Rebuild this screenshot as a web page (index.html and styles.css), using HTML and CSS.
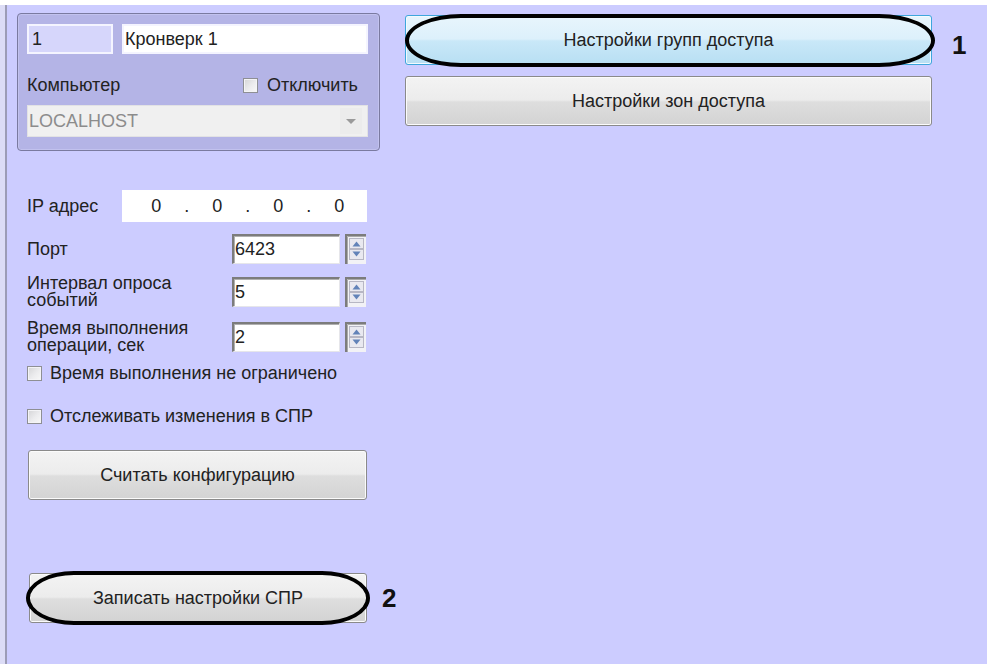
FILE: index.html
```html
<!DOCTYPE html>
<html lang="ru">
<head>
<meta charset="utf-8">
<title>Кронверк 1</title>
<link rel="stylesheet" href="styles.css">
</head>
<body>
<div class="frame">
  <div class="window">
    <div class="left">
      <div class="group">
        <div class="group-row">
          <div class="field id-field">1</div>
          <div class="field name-field">Кронверк 1</div>
        </div>
        <div class="group-row computer-row">
          <span class="label">Компьютер</span>
          <label class="check check-off"><span class="box"></span><span>Отключить</span></label>
        </div>
        <div class="combo"><span>LOCALHOST</span><span class="combo-btn"><span class="combo-arrow"></span></span></div>
      </div>

      <div class="params">
        <div class="ip-row">
          <span class="label ip-label">IP адрес</span>
          <div class="ip-field">
            <span>0</span><span>.</span><span>0</span><span>.</span><span>0</span><span>.</span><span>0</span>
          </div>
        </div>

        <div class="spins">
          <div class="spin-row">
            <span class="label spin-label">Порт</span>
            <div class="spin-field">6423</div>
            <svg class="spin-btn" width="21" height="30" viewBox="0 0 21 30">
              <rect x="0" y="0" width="21" height="30" fill="#f2f2f6"/>
              <path d="M1 30V1H21" stroke="#7c7c7c" stroke-width="2" fill="none"/>
              <path d="M2.5 30V2.5H21" stroke="#a9a9a9" stroke-width="1" fill="none"/>
              <rect x="4.5" y="4.5" width="14" height="10" fill="#e9e9f0" stroke="#b7b7c4"/>
              <rect x="4.5" y="15.5" width="14" height="10" fill="#e9e9f0" stroke="#b7b7c4"/>
              <path d="M7.5 12.5L11.5 7.5L15.5 12.5Z" fill="#6283b8"/>
              <path d="M7.5 17.5L11.5 22.5L15.5 17.5Z" fill="#6283b8"/>
            </svg>
          </div>
          <div class="spin-row">
            <span class="label spin-label">Интервал опроса событий</span>
            <div class="spin-field">5</div>
            <svg class="spin-btn" width="21" height="30" viewBox="0 0 21 30">
              <rect x="0" y="0" width="21" height="30" fill="#f2f2f6"/>
              <path d="M1 30V1H21" stroke="#7c7c7c" stroke-width="2" fill="none"/>
              <path d="M2.5 30V2.5H21" stroke="#a9a9a9" stroke-width="1" fill="none"/>
              <rect x="4.5" y="4.5" width="14" height="10" fill="#e9e9f0" stroke="#b7b7c4"/>
              <rect x="4.5" y="15.5" width="14" height="10" fill="#e9e9f0" stroke="#b7b7c4"/>
              <path d="M7.5 12.5L11.5 7.5L15.5 12.5Z" fill="#6283b8"/>
              <path d="M7.5 17.5L11.5 22.5L15.5 17.5Z" fill="#6283b8"/>
            </svg>
          </div>
          <div class="spin-row">
            <span class="label spin-label">Время выполнения операции, сек</span>
            <div class="spin-field">2</div>
            <svg class="spin-btn" width="21" height="30" viewBox="0 0 21 30">
              <rect x="0" y="0" width="21" height="30" fill="#f2f2f6"/>
              <path d="M1 30V1H21" stroke="#7c7c7c" stroke-width="2" fill="none"/>
              <path d="M2.5 30V2.5H21" stroke="#a9a9a9" stroke-width="1" fill="none"/>
              <rect x="4.5" y="4.5" width="14" height="10" fill="#e9e9f0" stroke="#b7b7c4"/>
              <rect x="4.5" y="15.5" width="14" height="10" fill="#e9e9f0" stroke="#b7b7c4"/>
              <path d="M7.5 12.5L11.5 7.5L15.5 12.5Z" fill="#6283b8"/>
              <path d="M7.5 17.5L11.5 22.5L15.5 17.5Z" fill="#6283b8"/>
            </svg>
          </div>
        </div>

        <label class="check check-limit"><span class="box"></span><span>Время выполнения не ограничено</span></label>
        <label class="check check-track"><span class="box"></span><span>Отслеживать изменения в СПР</span></label>

        <div class="btn read-btn">Считать конфигурацию</div>

        <div class="callout-row write-row">
          <div class="btn write-btn">Записать настройки СПР<span class="ring"></span></div>
          <span class="callout">2</span>
        </div>
      </div>
    </div>

    <div class="right">
      <div class="callout-row groups-row">
        <div class="btn btn-hot groups-btn">Настройки групп доступа<span class="ring"></span></div>
        <span class="callout callout-top">1</span>
      </div>
      <div class="btn zones-btn">Настройки зон доступа</div>
    </div>
  </div>
</div>
</body>
</html>
```

FILE: styles.css
```css
* { box-sizing: border-box; }

html, body {
  margin: 0;
  height: 100%;
}

body {
  background: #ffffff;
  font-family: "Liberation Sans", Arial, sans-serif;
  font-size: 18px;
  color: #222222;
  overflow: hidden;
}

.frame {
  margin-top: 5px;
  height: 659px;
  padding-left: 5px;
  background: #dcdcf6;
}

.window {
  height: 100%;
  display: flex;
  background: #ccccff;
  border-left: 2px solid #9c9cb6;
}

/* ---------- left column ---------- */

.left {
  width: 375px;
  flex: none;
}

.group {
  margin: 8px 0 0 10px;
  width: 363px;
  border: 1px solid #7a7aa0;
  border-radius: 4px;
  background: #b4b4e6;
  padding: 10px 11px 13px 9px;
  box-shadow: inset 0 0 0 1px #c2c2ee;
}

.group-row {
  display: flex;
  align-items: center;
  gap: 9px;
}

.field {
  height: 30px;
  line-height: 26px;
  border: 2px solid #f4f4ff;
  padding: 0 2px;
  white-space: nowrap;
}

.id-field {
  width: 86px;
  flex: none;
  background: #d6d6fb;
  padding-left: 3px;
}

.name-field {
  flex: 1;
  background: #ffffff;
  padding-left: 1px;
}

.computer-row {
  margin-top: 20px;
  height: 22px;
}

.check {
  display: flex;
  align-items: center;
  gap: 9px;
  white-space: nowrap;
}

.check-off {
  margin-left: auto;
  margin-right: 10px;
}

.box {
  width: 15px;
  height: 15px;
  flex: none;
  border: 1px solid #8e8f94;
  background: linear-gradient(135deg, #d4d4d6 0%, #ececee 55%, #f8f8f8 100%);
  box-shadow: inset 0 0 0 1px #f4f4f6;
}

.combo {
  margin-top: 9px;
  height: 32px;
  display: flex;
  align-items: center;
  justify-content: space-between;
  background: #f0f0f0;
  border: 1px solid #e2e2e4;
  color: #8c8c8c;
  padding: 0 5px 0 1px;
}

.combo-btn {
  width: 22px;
  height: 26px;
  display: flex;
  align-items: center;
  justify-content: center;
  background: #ececec;
}

.combo-arrow {
  width: 0;
  height: 0;
  border-left: 5px solid transparent;
  border-right: 5px solid transparent;
  border-top: 5px solid #9a9a9a;
}

.params {
  padding: 0 15px 0 20px;
}

.ip-row {
  margin-top: 39px;
  display: flex;
  align-items: center;
  height: 32px;
}

.ip-label {
  width: 95px;
  flex: none;
}

.ip-field {
  flex: 1;
  height: 32px;
  background: #ffffff;
  display: flex;
  align-items: center;
  padding-left: 19px;
}

.ip-field span {
  width: 30.5px;
  text-align: center;
}

.spins {
  margin-top: 12px;
  display: flex;
  flex-direction: column;
  gap: 11px;
}

.spin-row {
  display: flex;
  align-items: center;
  min-height: 30px;
}

.spin-label {
  width: 205px;
  flex: none;
  line-height: 17px;
}

.spin-field {
  width: 108px;
  height: 30px;
  flex: none;
  background: #ffffff;
  border-style: solid;
  border-width: 2px 1px 1px 2px;
  border-color: #7c7c7c #e6e6ea #e6e6ea #7c7c7c;
  box-shadow: inset 1px 1px 0 #b0b0b0;
  line-height: 26px;
  padding-left: 1px;
}

.spin-btn {
  margin-left: 5px;
  flex: none;
  display: block;
}

.check-limit {
  margin-top: 9px;
  height: 20px;
  gap: 8px;
}

.check-track {
  margin-top: 23px;
  height: 20px;
  gap: 8px;
}

/* ---------- buttons ---------- */

.btn {
  position: relative;
  height: 50px;
  display: flex;
  align-items: center;
  justify-content: center;
  border: 1px solid #8a8a8a;
  border-radius: 3px;
  background: linear-gradient(#f3f3f3 0%, #ececec 48%, #dedede 52%, #d3d3d3 100%);
  box-shadow: inset 0 0 0 1px #fbfbfb;
  white-space: nowrap;
}

.btn-hot {
  border-color: #3ea6dc;
  background: linear-gradient(#e8f5fc 0%, #dcf0fb 48%, #c9e8f8 52%, #b8dff3 100%);
  box-shadow: inset 0 0 0 1px #f2fafe;
}

.read-btn {
  margin: 24px 0 0 1px;
  width: 339px;
}

.callout-row {
  display: flex;
  align-items: center;
}

.write-row {
  margin-top: 73px;
  margin-left: 2px;
  gap: 15px;
}

.write-btn {
  width: 338px;
  flex: none;
}

.callout {
  font-weight: bold;
  font-size: 26px;
  color: #111;
  flex: none;
}

.callout-top {
  margin-top: 10px;
}

/* hand-drawn marker ring over the highlighted button */
.ring {
  position: absolute;
  left: -4px;
  right: -4px;
  top: -3px;
  bottom: -3px;
  border: 4px solid #000;
  border-radius: 48px / 50%;
  pointer-events: none;
}

.groups-btn .ring {
  left: -1px;
  right: -4px;
  top: -2px;
  bottom: -3px;
  border-radius: 56px / 50%;
}

/* ---------- right column ---------- */

.right {
  padding: 10px 0 0 23px;
}

.groups-row {
  gap: 20px;
}

.groups-btn {
  width: 527px;
  flex: none;
}

.zones-btn {
  margin-top: 11px;
  width: 527px;
}
```
